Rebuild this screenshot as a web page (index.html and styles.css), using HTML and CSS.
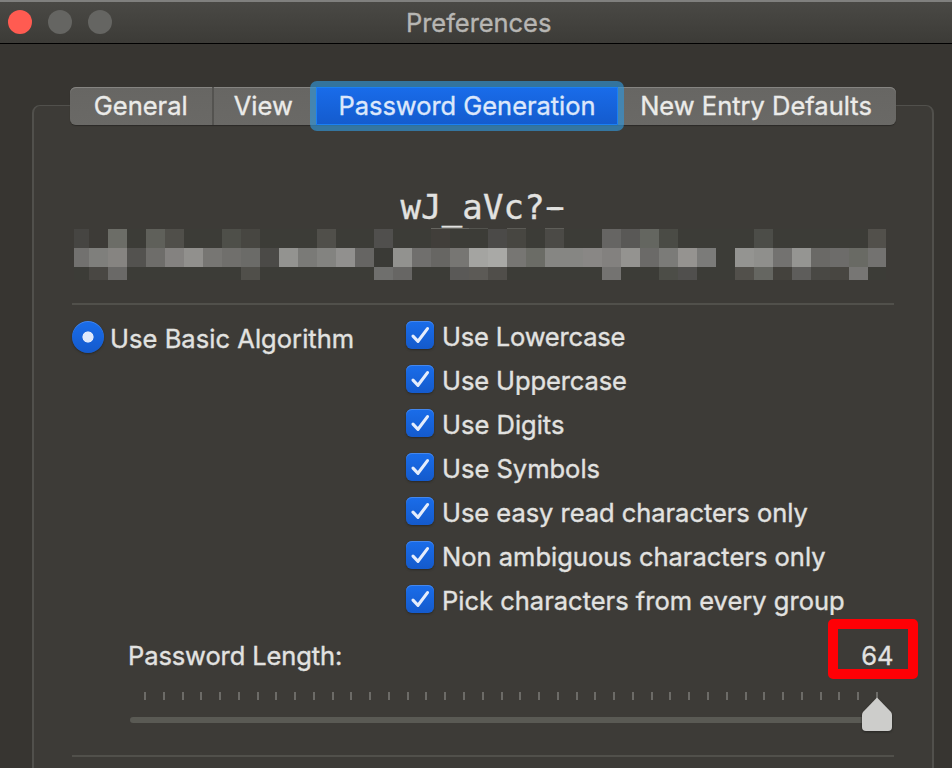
FILE: index.html
```html
<!DOCTYPE html>
<html lang="en">
<head>
<meta charset="utf-8">
<title>Preferences</title>
<link rel="stylesheet" href="styles.css">
</head>
<body>
<div class="window">
  <header class="titlebar">
    <div class="lights"><span class="light close"></span><span class="light"></span><span class="light"></span></div>
    <h1 class="title">Preferences</h1>
  </header>
  <main class="body">
    <nav class="tabs">
      <button class="tab general"><span>General</span></button>
      <button class="tab view"><span>View</span></button>
      <button class="tab selected"><span>Password Generation</span></button>
      <button class="tab defaults"><span>New Entry Defaults</span></button>
    </nav>
    <section class="panel">
      <div class="sample">wJ_aVc?<span class="dash">-</span></div>
      <div class="mosaic" id="mosaic"></div>
      <hr class="rule">
      <div class="options">
        <label class="radio"><span class="dot"></span><span class="basic">Use Basic Algorithm</span></label>
        <div class="checks">
          <label class="check"><span class="box"><svg viewBox="0 0 28 28"><path d="M7 15.2 12 20.3 21.5 7.6"/></svg></span><span class="tight">Use Lowercase</span></label>
          <label class="check"><span class="box"><svg viewBox="0 0 28 28"><path d="M7 15.2 12 20.3 21.5 7.6"/></svg></span><span class="snug">Use Uppercase</span></label>
          <label class="check"><span class="box"><svg viewBox="0 0 28 28"><path d="M7 15.2 12 20.3 21.5 7.6"/></svg></span><span>Use Digits</span></label>
          <label class="check"><span class="box"><svg viewBox="0 0 28 28"><path d="M7 15.2 12 20.3 21.5 7.6"/></svg></span><span>Use Symbols</span></label>
          <label class="check"><span class="box"><svg viewBox="0 0 28 28"><path d="M7 15.2 12 20.3 21.5 7.6"/></svg></span><span class="long">Use easy read characters only</span></label>
          <label class="check"><span class="box"><svg viewBox="0 0 28 28"><path d="M7 15.2 12 20.3 21.5 7.6"/></svg></span><span>Non ambiguous characters only</span></label>
          <label class="check"><span class="box"><svg viewBox="0 0 28 28"><path d="M7 15.2 12 20.3 21.5 7.6"/></svg></span><span>Pick characters from every group</span></label>
        </div>
      </div>
      <div class="length">
        <span class="length-label">Password Length:</span>
        <span class="length-value">64<span class="highlight"></span></span>
      </div>
      <div class="slider">
        <div class="ticks" id="ticks"></div>
        <div class="track"></div>
        <svg class="thumb" viewBox="0 0 34 38"><path d="M17 1.5 31 16Q32 17.3 32 19V31Q32 35 28 35H6Q2 35 2 31V19Q2 17.3 3 16Z"/></svg>
      </div>
      <hr class="rule last">
    </section>
  </main>
</div>
<script src="app.js"></script>
</body>
</html>
```
FILE: styles.css
```css
* { box-sizing: border-box; }
body {
  margin: 0;
  background: #373531;
  font-family: Inter, "Liberation Sans", sans-serif;
  font-size: 25.5px;
  color: #e2e2e0;
  white-space: nowrap;
  -webkit-text-stroke: .35px currentColor;
}
.window { width: 952px; height: 768px; overflow: hidden; display: flex; flex-direction: column; }
.titlebar {
  height: 44px;
  flex: none;
  display: grid;
  grid-template-columns: 406px 1fr;
  align-items: center;
  border-top: 2px solid #80807e;
  border-bottom: 1px solid #000;
  background: linear-gradient(#4a4945, #3c3b37);
}
.lights { display: flex; gap: 16px; padding-left: 8px; margin-bottom: 1px; }
.light { width: 24px; height: 24px; border-radius: 50%; background: #656562; }
.close { background: #ff5b51; }
.title { margin: 0; font-size: 25.5px; font-weight: 400; color: #b7b6b3; letter-spacing: -.05px; line-height: 30px; }
.body { flex: 1; padding: 43px 18px 0 32px; display: flex; flex-direction: column; }
.tabs {
  width: 826px;
  height: 38px;
  flex: none;
  margin-left: 38px;
  display: flex;
  position: relative;
  z-index: 1;
  border-radius: 6px;
  background: linear-gradient(#676663, #6a6966);
  box-shadow: inset 0 1px #858481, 0 1px 1px #2b2a27;
}
.tab {
  border: 0;
  padding: 0;
  background: none;
  font: inherit;
  color: #ebebe9;
  line-height: 38px;
  text-align: center;
  white-space: nowrap;
}
.general { width: 143.5px; border-right: 2px solid #545350; }
.view { width: 102.5px; padding-right: 3px; }
.selected {
  width: 302px;
  color: #dce7fb;
  letter-spacing: -.04px;
  background: linear-gradient(#196cea, #145bcd);
  box-shadow: inset 0 0 0 1px #1a80f5, 0 0 0 6px rgba(50, 148, 215, .66);
  border-radius: 1px;
  clip-path: inset(-6px round 7px);
}
.defaults { width: 278px; padding-right: 2px; }
.panel {
  flex: 1;
  margin: -20px 0 -10px;
  width: 902px;
  padding: 80px 38px 0;
  border: 2px solid #51504c;
  border-width: 1.5px 2px 2px;
  border-radius: 8px;
  background: #3d3b37;
  display: flex;
  flex-direction: column;
}
.sample {
  height: 42px;
  line-height: 42px;
  padding-left: 328.5px;
  font-family: "DejaVu Sans Mono", monospace;
  font-size: 34px;
  letter-spacing: .15px;
}
.dash { position: relative; top: -1px; text-shadow: -4px 0 #e2e2e0, 4px 0 #e2e2e0; }
.mosaic {
  display: grid;
  grid-template-columns: 15px repeat(41, 19px) 18px;
  grid-template-rows: 1px 19px 19px 13px;
  margin-left: 2px;
  width: 812px;
}
.rule { width: 822px; height: 2px; margin: 23px 0 0; border: 0; background: #51504b; flex: none; }
.options { display: flex; margin-top: 16px; height: 308px; flex: none; }
.radio { width: 334px; height: 32px; display: flex; align-items: center; gap: 6px; }
.basic { padding-top: 3px; letter-spacing: .04px; }
.dot {
  width: 32px;
  height: 32px;
  border-radius: 50%;
  background: radial-gradient(circle at center, #dfe9fb 0 5.2px, transparent 5.9px), linear-gradient(#1a6dea, #145acc);
  box-shadow: inset 0 1px #4487ed, 0 1px 2px #292825;
}
.check { height: 44px; display: flex; gap: 8px; line-height: 32px; }
.tight { letter-spacing: -.18px; }
.snug { letter-spacing: -.1px; }
.long { letter-spacing: -.04px; }
.box {
  width: 28px;
  height: 28px;
  border-radius: 6px;
  background: linear-gradient(#1a6dea, #145acc);
  box-shadow: inset 0 1px #4487ed, 0 1px 2px #292825;
}
.box svg { display: block; width: 28px; height: 28px; fill: none; stroke: #e5edfc; stroke-width: 3.1; stroke-linecap: round; stroke-linejoin: round; }
.length { display: flex; justify-content: space-between; padding: 11px .5px 0 56px; height: 54px; line-height: 32px; flex: none; }
.length-label { letter-spacing: -.1px; }
.length-value { position: relative; }
.highlight { position: absolute; right: -24px; top: -21px; width: 90px; height: 60px; border: 10px solid #ff0005; border-radius: 5px; }
.slider { position: relative; height: 48px; padding: 9px 2px 0 58px; flex: none; }
.ticks { display: flex; justify-content: space-between; width: 734px; margin-left: 14px; }
.ticks i { width: 2px; height: 8px; background: #6c6b67; }
.track { margin-top: 17px; height: 6px; border-radius: 3px; background: #5a5a54; }
.thumb { position: absolute; right: 0; top: 13px; width: 34px; height: 38px; fill: #cdcdcb; filter: drop-shadow(0 1px 1px #252421); }
.last { margin-top: 24px; }
```
FILE: app.js
```javascript
// Column index -> shade, for each of the four mosaic rows.
const rows = [
  {19:'666560',20:'666560',21:'53534e',23:'5c5b56',25:'5f5e59'},
  {0:'464542',1:'3d3b37',2:'6c6d67',4:'5f605a',5:'504f4a',8:'4e4f49',9:'474641',13:'504f4a',16:'504f4d',19:'413e3a',22:'4b4a48',23:'474641',25:'4b4a46',28:'666563',29:'595856',30:'646660',31:'4a4b45',36:'4c4d48',42:'52504b'},
  '72716f 7f7f7c 868481 53524f 6e6d6a 848280 91908d 777673 706f6c 6b6b68 4b4a47 939390 7a7a77 838380 91908e 666563 3a3a36 92928f 706f6d 676663 777673 a4a4a1 a9a9a6 777673 6b6c66 868683 868683 898785 83817f 949390 6b6a68 7b7b78 959390 7b7b79 3c3c37 949491 8f8f8c 737270 959592 6a6966 6d6c6a 696a64 737270'.split(' '),
  {1:'494743',2:'6a6967',9:'504f4a',16:'6f6f6d',17:'676664',20:'5a5957',21:'5c5a56',22:'504e4a',28:'747371',31:'4c4d47',32:'504f4d',35:'52504b',36:'656661',37:'44423d',38:'5e5d5b',39:'494844',40:'484641',41:'777674'}
];
const mosaic = document.getElementById('mosaic');
rows.forEach((row, r) => {
  for (let c = 0; c < 43; c++) {
    const cell = document.createElement('i');
    cell.style.background = '#' + (row[c] || (r ? '3c3c37' : '3d3b37'));
    mosaic.append(cell);
  }
});
const ticks = document.getElementById('ticks');
for (let i = 0; i < 40; i++) ticks.append(document.createElement('i'));
```
